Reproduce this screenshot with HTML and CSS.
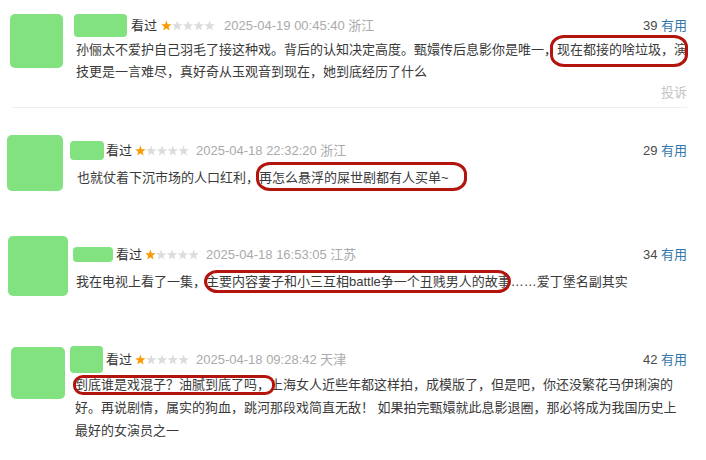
FILE: index.html
```html
<!DOCTYPE html>
<html lang="zh-CN">
<head>
    <meta charset="UTF-8">
    <meta name="viewport" content="width=device-width, initial-scale=1.0">
    <title>短评</title>
    <link rel="stylesheet" href="styles.css">
</head>
<body>

    <div class="comment-list">

        <div class="comment c1">
            <div class="avatar"></div>
            <div class="main">
                <div class="head">
                    <span class="name"></span>
                    <span class="status">看过</span>
                    <svg class="stars" viewBox="0 0 55 11" width="54" height="11">
                        <polygon class="on" points="5.5,0.4 6.85,4.14 10.83,4.27 7.69,6.71 8.79,10.53 5.5,8.3 2.21,10.53 3.31,6.71 0.17,4.27 4.15,4.14"/>
                        <polygon transform="translate(11 0)" points="5.5,0.4 6.85,4.14 10.83,4.27 7.69,6.71 8.79,10.53 5.5,8.3 2.21,10.53 3.31,6.71 0.17,4.27 4.15,4.14"/>
                        <polygon transform="translate(22 0)" points="5.5,0.4 6.85,4.14 10.83,4.27 7.69,6.71 8.79,10.53 5.5,8.3 2.21,10.53 3.31,6.71 0.17,4.27 4.15,4.14"/>
                        <polygon transform="translate(33 0)" points="5.5,0.4 6.85,4.14 10.83,4.27 7.69,6.71 8.79,10.53 5.5,8.3 2.21,10.53 3.31,6.71 0.17,4.27 4.15,4.14"/>
                        <polygon transform="translate(44 0)" points="5.5,0.4 6.85,4.14 10.83,4.27 7.69,6.71 8.79,10.53 5.5,8.3 2.21,10.53 3.31,6.71 0.17,4.27 4.15,4.14"/>
                    </svg>
                    <span class="time">2025-04-19 00:45:40 浙江</span>
                    <span class="votes">39 <a href="#">有用</a></span>
                </div>
                <p class="text">孙俪太不爱护自己羽毛了接这种戏。背后的认知决定高度。甄嬛传后息影你是唯一，<span class="mark m1">现在都接的啥垃圾，演</span><br>技更是一言难尽，真好奇从玉观音到现在，她到底经历了什么</p>
                <div class="report">投诉</div>
            </div>
        </div>
        <div class="divider"></div>

        <div class="comment c2">
            <div class="avatar"></div>
            <div class="main">
                <div class="head">
                    <span class="name"></span>
                    <span class="status">看过</span>
                    <svg class="stars" viewBox="0 0 55 11" width="54" height="11">
                        <polygon class="on" points="5.5,0.4 6.85,4.14 10.83,4.27 7.69,6.71 8.79,10.53 5.5,8.3 2.21,10.53 3.31,6.71 0.17,4.27 4.15,4.14"/>
                        <polygon transform="translate(11 0)" points="5.5,0.4 6.85,4.14 10.83,4.27 7.69,6.71 8.79,10.53 5.5,8.3 2.21,10.53 3.31,6.71 0.17,4.27 4.15,4.14"/>
                        <polygon transform="translate(22 0)" points="5.5,0.4 6.85,4.14 10.83,4.27 7.69,6.71 8.79,10.53 5.5,8.3 2.21,10.53 3.31,6.71 0.17,4.27 4.15,4.14"/>
                        <polygon transform="translate(33 0)" points="5.5,0.4 6.85,4.14 10.83,4.27 7.69,6.71 8.79,10.53 5.5,8.3 2.21,10.53 3.31,6.71 0.17,4.27 4.15,4.14"/>
                        <polygon transform="translate(44 0)" points="5.5,0.4 6.85,4.14 10.83,4.27 7.69,6.71 8.79,10.53 5.5,8.3 2.21,10.53 3.31,6.71 0.17,4.27 4.15,4.14"/>
                    </svg>
                    <span class="time">2025-04-18 22:32:20 浙江</span>
                    <span class="votes">29 <a href="#">有用</a></span>
                </div>
                <p class="text">也就仗着下沉市场的人口红利，<span class="mark m2">再怎么悬浮的屎世剧都有人买单~</span></p>
            </div>
        </div>

        <div class="comment c3">
            <div class="avatar"></div>
            <div class="main">
                <div class="head">
                    <span class="name"></span>
                    <span class="status">看过</span>
                    <svg class="stars" viewBox="0 0 55 11" width="54" height="11">
                        <polygon class="on" points="5.5,0.4 6.85,4.14 10.83,4.27 7.69,6.71 8.79,10.53 5.5,8.3 2.21,10.53 3.31,6.71 0.17,4.27 4.15,4.14"/>
                        <polygon transform="translate(11 0)" points="5.5,0.4 6.85,4.14 10.83,4.27 7.69,6.71 8.79,10.53 5.5,8.3 2.21,10.53 3.31,6.71 0.17,4.27 4.15,4.14"/>
                        <polygon transform="translate(22 0)" points="5.5,0.4 6.85,4.14 10.83,4.27 7.69,6.71 8.79,10.53 5.5,8.3 2.21,10.53 3.31,6.71 0.17,4.27 4.15,4.14"/>
                        <polygon transform="translate(33 0)" points="5.5,0.4 6.85,4.14 10.83,4.27 7.69,6.71 8.79,10.53 5.5,8.3 2.21,10.53 3.31,6.71 0.17,4.27 4.15,4.14"/>
                        <polygon transform="translate(44 0)" points="5.5,0.4 6.85,4.14 10.83,4.27 7.69,6.71 8.79,10.53 5.5,8.3 2.21,10.53 3.31,6.71 0.17,4.27 4.15,4.14"/>
                    </svg>
                    <span class="time">2025-04-18 16:53:05 江苏</span>
                    <span class="votes">34 <a href="#">有用</a></span>
                </div>
                <p class="text">我在电视上看了一集，<span class="mark m3">主要内容妻子和小三互相battle争一个丑贱男人的故事</span>……爱丁堡名副其实</p>
            </div>
        </div>

        <div class="comment c4">
            <div class="avatar"></div>
            <div class="main">
                <div class="head">
                    <span class="name"></span>
                    <span class="status">看过</span>
                    <svg class="stars" viewBox="0 0 55 11" width="54" height="11">
                        <polygon class="on" points="5.5,0.4 6.85,4.14 10.83,4.27 7.69,6.71 8.79,10.53 5.5,8.3 2.21,10.53 3.31,6.71 0.17,4.27 4.15,4.14"/>
                        <polygon transform="translate(11 0)" points="5.5,0.4 6.85,4.14 10.83,4.27 7.69,6.71 8.79,10.53 5.5,8.3 2.21,10.53 3.31,6.71 0.17,4.27 4.15,4.14"/>
                        <polygon transform="translate(22 0)" points="5.5,0.4 6.85,4.14 10.83,4.27 7.69,6.71 8.79,10.53 5.5,8.3 2.21,10.53 3.31,6.71 0.17,4.27 4.15,4.14"/>
                        <polygon transform="translate(33 0)" points="5.5,0.4 6.85,4.14 10.83,4.27 7.69,6.71 8.79,10.53 5.5,8.3 2.21,10.53 3.31,6.71 0.17,4.27 4.15,4.14"/>
                        <polygon transform="translate(44 0)" points="5.5,0.4 6.85,4.14 10.83,4.27 7.69,6.71 8.79,10.53 5.5,8.3 2.21,10.53 3.31,6.71 0.17,4.27 4.15,4.14"/>
                    </svg>
                    <span class="time">2025-04-18 09:28:42 天津</span>
                    <span class="votes">42 <a href="#">有用</a></span>
                </div>
                <p class="text"><span class="mark m4">到底谁是戏混子？油腻到底了吗，</span>上海女人近些年都这样拍，成模版了，但是吧，你还没繁花马伊琍演的<br>好。再说剧情，属实的狗血，跳河那段戏简直无敌！ 如果拍完甄嬛就此息影退圈，那必将成为我国历史上<br>最好的女演员之一</p>
            </div>
        </div>

    </div>

</body>
</html>
```

FILE: styles.css
```css
body {
    margin: 0;
    font-family: "Liberation Sans", "Noto Sans CJK SC", sans-serif;
    font-size: 13px;
    color: #494949;
    background-color: #fff;
}
.comment-list {
    width: 706px;
}
.comment {
    display: flex;
    align-items: flex-start;
    padding-right: 19px;
}
.avatar {
    flex-shrink: 0;
    background-color: #81e27f;
    border-radius: 5px;
}
.main {
    flex: 1;
}
.head {
    display: flex;
    align-items: center;
    line-height: 15px;
    white-space: nowrap;
}
.name {
    display: block;
    background-color: #81e27f;
    border-radius: 4px;
}
.status {
    margin-left: 3px;
    color: #333;
}
.stars {
    margin-left: 3px;
    display: block;
}
.stars polygon {
    fill: #dcdcdc;
}
.stars polygon.on {
    fill: #f99b01;
}
.time {
    margin-left: 7px;
    color: #aaa;
}
.votes {
    margin-left: auto;
    color: #494949;
}
.votes a {
    color: #3377aa;
    text-decoration: none;
}
.text {
    margin: 0;
    color: #3a3a3a;
    white-space: nowrap;
}
.report {
    text-align: right;
    line-height: 20px;
    color: #c4c4c4;
}
.divider {
    margin: 4px 19px 0 13px;
    border-top: 1px solid #eeeeee;
}

/* red marks drawn over the text */
.mark {
    display: inline-block;
    position: relative;
}
.mark::after {
    content: "";
    position: absolute;
    border: 3px solid #b3150e;
    border-radius: 14px / 12px;
}
.m1::after { top: -4px; bottom: -6px; left: -7px; right: -1px; }
.m2::after { top: -5px; bottom: -2px; left: -3px; right: -18px; }
.m3::after { top: -1px; bottom: 0; left: -2px; right: 0; }
.m4::after { top: 2px; bottom: 1px; left: -2px; right: -5px; border-radius: 10px / 9px; }

/* block 1 */
.c1 {
    padding-top: 14px;
}
.c1 .avatar {
    width: 53px;
    height: 54px;
    margin-left: 10px;
}
.c1 .main {
    margin-left: 11px;
}
.c1 .name {
    width: 53px;
    height: 23px;
}
.c1 .status { margin-left: 4px; }
.c1 .stars { margin-left: 4px; }
.c1 .time { margin-left: 9px; }
.c1 .text {
    margin-top: 2px;
    padding-left: 2px;
    line-height: 22px;
}

/* block 2 */
.c2 {
    margin-top: 27px;
}
.c2 .avatar {
    width: 56px;
    height: 56px;
    margin-left: 7px;
}
.c2 .main {
    margin-left: 7px;
}
.c2 .head {
    padding-top: 6px;
}
.c2 .name {
    width: 34px;
    height: 19px;
}
.c2 .status { margin-left: 2px; }
.c2 .text {
    margin-top: 7px;
    padding-left: 7px;
    line-height: 22px;
}

/* block 3 */
.c3 {
    margin-top: 45px;
}
.c3 .avatar {
    width: 60px;
    height: 60px;
    margin-left: 8px;
}
.c3 .main {
    margin-left: 5px;
}
.c3 .head {
    padding-top: 11px;
}
.c3 .name {
    width: 40px;
    height: 15px;
}
.c3 .text {
    margin-top: 9px;
    padding-left: 3px;
    line-height: 22px;
}

/* block 4 */
.c4 {
    margin-top: 50px;
}
.c4 .avatar {
    width: 54px;
    height: 52px;
    margin-top: 1px;
    margin-left: 11px;
}
.c4 .main {
    margin-left: 5px;
}
.c4 .name {
    width: 33px;
    height: 27px;
}
.c4 .text {
    padding-left: 5px;
    line-height: 23px;
}
```
